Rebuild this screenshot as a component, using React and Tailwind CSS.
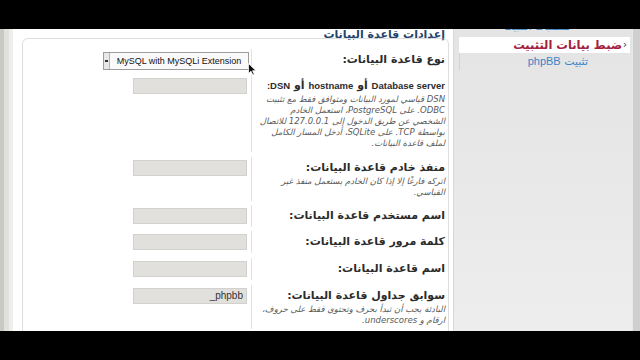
import React from "react";

const ar = { fontFamily: '"DejaVu Sans", "Noto Sans", sans-serif' };
const lat = { fontFamily: '"Liberation Sans", Arial, sans-serif' };

// latin words inside arabic labels are rendered narrower in the shot
function L({ children, size = "text-[9.5px]" }) {
  return (
    <span className={size} style={lat}>
      {children}
    </span>
  );
}

function Field({ value }) {
  return (
    <div className="mt-[3px] h-[16px] w-[114px] border border-[#d3d1cd] bg-[#e2e0dc] text-[10px] leading-[14px] text-[#333] pr-[3px]" style={lat}>
      {value}
    </div>
  );
}

function Row({ label, desc, control, className = "" }) {
  return (
    <div className={`flex ${className}`}>
      <div className="w-[197px] shrink-0 border-l border-[#e2e2e2] pt-[3px] pb-[3px] pr-[3px]">
        <div className="text-[11px] leading-[16px] font-bold text-[#2b2b2b] whitespace-nowrap">{label}</div>
        {desc && (
          <div className="text-[8.5px] leading-[11px] italic text-[#5a5a5a]">
            {desc.map((l, i) => (
              <div key={i} className="whitespace-nowrap">{l}</div>
            ))}
          </div>
        )}
      </div>
      <div className="flex-1 pr-[4px] flex justify-start items-start">{control}</div>
    </div>
  );
}

export default function App() {
  return (
    <div className="w-[640px] h-[360px] bg-black flex flex-col overflow-hidden" style={ar}>
      <div className="h-[29px] bg-black" />
      <div className="h-[302px] flex relative overflow-hidden bg-white">
        {/* left edge */}
        <div className="w-[4px] bg-[#c9c9c2]" />
        <div className="w-[5px] bg-[#e0e0dd]" />
        <div className="w-[4px] bg-[#eeeeec]" />

        {/* main */}
        <div className="w-[440px] pl-[9px] pr-[4px]">
          <div className="h-[9px] text-right pr-[4px] text-[11px] leading-[12px] font-bold text-[#23436b]" dir="rtl">
            إعدادات قاعدة البيانات
          </div>
          <div className="border border-[#dedede] rounded-tl-[6px] rounded-tr-[6px] pt-[10px] h-[320px]" dir="rtl">
            <Row
              label="نوع قاعدة البيانات:"
              control={
                <div className="mt-[3px] mr-[-2px] h-[18px] w-[146px] flex border border-[#9c9c9c] bg-[#fafafa]" dir="ltr">
                  <div className="w-[6px] border-r border-[#b5b5b5] bg-[#e8e8e8] flex items-center justify-center">
                    <div className="w-[3px] h-[2px] bg-[#333]" />
                  </div>
                  <div className="flex-1 text-center whitespace-nowrap text-[9px] leading-[16px] text-[#111]" style={lat}>
                    MySQL with MySQLi Extension
                  </div>
                </div>
              }
            />
            <Row
              className="mt-[4px]"
              label={
                <>
                  <L>Database server</L> أو <L>hostname</L> أو <L>DSN:</L>
                </>
              }
              desc={[
                "DSN قياسي لمورد البيانات ومتوافق فقط مع تثبيت",
                "ODBC. على PostgreSQL، استعمل الخادم",
                "الشخصي عن طريق الدخول إلى 127.0.0.1 للاتصال",
                "بواسطة TCP. على SQLite، أدخل المسار الكامل",
                "لملف قاعدة البيانات.",
              ]}
              control={<Field />}
            />
            <Row
              className="mt-[5px]"
              label="منفذ خادم قاعدة البيانات:"
              desc={["اتركه فارغًا إلا إذا كان الخادم يستعمل منفذ غير", "القياسي."]}
              control={<Field />}
            />
            <Row className="mt-[4px]" label="اسم مستخدم قاعدة البيانات:" control={<Field />} />
            <Row className="mt-[4px]" label="كلمة مرور قاعدة البيانات:" control={<Field />} />
            <Row className="mt-[5px]" label="اسم قاعدة البيانات:" control={<Field />} />
            <Row
              className="mt-[5px]"
              label="سوابق جداول قاعدة البيانات:"
              desc={["البادئة يجب أن تبدأ بحرف وتحتوي فقط على حروف،", "ارقام و underscores."]}
              control={<Field value="phpbb_" />}
            />
          </div>
        </div>

        {/* sidebar */}
        <div className="w-[179px] border-l border-[#d8d8d8] bg-gradient-to-b from-[#e4e4e4] to-[#ededed]">
          <div className="-mt-[12px] ml-[5px] mr-[2px]" dir="rtl">
            <div className="h-[19px] pr-[60px] text-[10px] leading-[19px] text-[#3d84c6]">متطلبات التثبيت</div>
            <div className="mt-[1px] h-[16px] bg-white pr-[3px] flex items-center text-[11.5px] leading-[16px] font-bold text-[#a3203f]">
              <span className="text-[#333] font-normal text-[10px] ml-[1px]">‹</span>
              ضبط بيانات التثبيت
            </div>
            <div className="h-[17px] pr-[42px] border-l border-[#d2d2d2] text-[11px] leading-[17px] text-[#3d84c6]">
              تثبيت <L size="text-[11px]">phpBB</L>
            </div>
          </div>
        </div>

        {/* scrollbar */}
        <div className="w-[8px] bg-[#cfcfcf] border-l border-[#e8e8e8]" />

        {/* mouse cursor */}
        <svg className="absolute left-[248px] top-[34px]" width="9" height="13" viewBox="0 0 9 13">
          <path d="M0.5 0.5 L0.5 10.5 L3 8.2 L4.8 12 L6.3 11.3 L4.6 7.7 L8 7.7 Z" fill="#111" stroke="#fff" strokeWidth="0.8" />
        </svg>
      </div>
      <div className="h-[29px] bg-black" />
    </div>
  );
}
